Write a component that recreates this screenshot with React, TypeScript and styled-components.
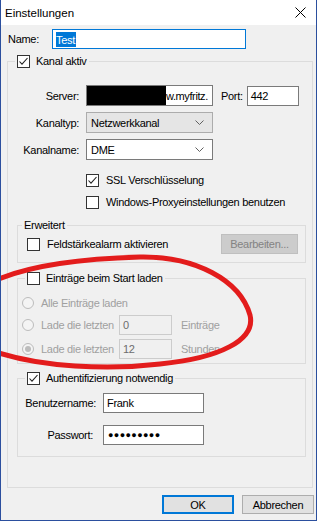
import React from "react";
import styled, { createGlobalStyle } from "styled-components";

const FONT = `"Liberation Sans", Arial, sans-serif`;

const GlobalStyle = createGlobalStyle`
  html, body { margin: 0; padding: 0; background: #ffffff; }
  body { font-family: ${FONT}; }
`;

const Window = styled.div`
  position: relative;
  box-sizing: border-box;
  width: 317px;
  height: 521px;
  display: flex;
  flex-direction: column;
  background: #f0f0f0;
  border: 1px solid #2b4f9e;
  border-top: none;
  font-family: ${FONT};
  font-size: 11px;
  letter-spacing: -0.3px;
  line-height: 14px;
  color: #000;
  overflow: hidden;
`;

const TitleBar = styled.div`
  flex: none;
  height: 25px;
  background: #ffffff;
  display: flex;
  align-items: center;
  justify-content: space-between;
  padding: 0 10px 0 4px;
  font-size: 11.5px;
  letter-spacing: 0;
`;

const Content = styled.div`
  display: flex;
  flex-direction: column;
  padding-top: 4px;
`;

const NameRow = styled.div`
  display: flex;
  align-items: center;
  padding-left: 7px;
  height: 20px;
`;

const NameLabel = styled.span`
  width: 44px;
`;

const Field = styled.div<{ $w: number; $h?: number; $variant?: "normal" | "focus" | "disabled" }>`
  box-sizing: border-box;
  flex: none;
  width: ${(p) => p.$w}px;
  height: ${(p) => p.$h ?? 20}px;
  display: flex;
  align-items: center;
  padding: 0 3px;
  overflow: hidden;
  white-space: nowrap;
  background: ${(p) => (p.$variant === "disabled" ? "#f0f0f0" : "#ffffff")};
  border: 1px solid
    ${(p) => (p.$variant === "focus" ? "#0078d7" : p.$variant === "disabled" ? "#cccccc" : "#7a7a7a")};
  color: ${(p) => (p.$variant === "disabled" ? "#6d6d6d" : "#000000")};
`;

const Selected = styled.span`
  background: #0078d7;
  color: #ffffff;
  padding: 1px 1px 0 0;
`;

const ServerField = styled(Field)`
  padding: 0;
`;

const Redaction = styled.span`
  flex: none;
  align-self: stretch;
  width: 80px;
  margin: -1px 0 -1px -1px;
  background: #000000;
`;

const ServerText = styled.span`
  letter-spacing: -0.4px;
`;

const Group = styled.fieldset<{ $m: string }>`
  margin: ${(p) => p.$m};
  padding: 0;
  border: 1px solid #dcdcdc;
  min-width: 0;
`;

const Legend = styled.legend<{ $offset: number }>`
  margin-left: ${(p) => p.$offset}px;
  padding: 0 2px;
  height: 14px;
  line-height: 14px;
`;

const LegendInner = styled.span`
  display: inline-flex;
  align-items: center;
  gap: 6px;
  height: 14px;
`;

const GroupBody = styled.div<{ $pad: string }>`
  display: flex;
  flex-direction: column;
  padding: ${(p) => p.$pad};
`;

const FormGrid = styled.div`
  display: grid;
  grid-template-columns: 71px auto;
  column-gap: 7px;
  row-gap: 6px;
  margin-top: 17px;
  align-items: center;
`;

const GridLabel = styled.span<{ $shift?: number }>`
  justify-self: end;
  white-space: nowrap;
  margin-right: ${(p) => p.$shift ?? 0}px;
`;

const InlineRow = styled.div`
  display: flex;
  align-items: center;
`;

const PortLabel = styled.span`
  margin: 0 4px 0 8px;
`;

const Combo = styled.div<{ $readonly?: boolean }>`
  box-sizing: border-box;
  width: 127px;
  height: 21px;
  display: flex;
  align-items: center;
  justify-content: space-between;
  padding: 0 8px 0 4px;
  background: ${(p) => (p.$readonly ? "#e5e5e5" : "#ffffff")};
  border: 1px solid ${(p) => (p.$readonly ? "#acacac" : "#7a7a7a")};
`;

const CheckRow = styled.div<{ $indent: number; $mt: number }>`
  display: flex;
  align-items: center;
  gap: 7px;
  height: 16px;
  margin-top: ${(p) => p.$mt}px;
  padding-left: ${(p) => p.$indent}px;
`;

const Box = styled.span`
  box-sizing: border-box;
  flex: none;
  width: 13px;
  height: 13px;
  border: 1px solid #333333;
  background: #ffffff;
  display: flex;
  align-items: center;
  justify-content: center;
`;

const SpaceRow = styled.div`
  display: flex;
  align-items: center;
  justify-content: space-between;
  height: 20px;
`;

const LeftGroup = styled.div`
  display: flex;
  align-items: center;
  gap: 7px;
`;

const Button = styled.div<{ $disabled?: boolean; $default?: boolean; $w: number; $h: number }>`
  box-sizing: border-box;
  width: ${(p) => p.$w}px;
  height: ${(p) => p.$h}px;
  display: flex;
  align-items: center;
  justify-content: center;
  background: ${(p) => (p.$disabled ? "#cccccc" : "#e1e1e1")};
  border: ${(p) => (p.$default ? "2px solid #0078d7" : p.$disabled ? "1px solid #bfbfbf" : "1px solid #adadad")};
  color: ${(p) => (p.$disabled ? "#838383" : "#000000")};
`;

const RadioRow = styled.div<{ $h: number }>`
  display: flex;
  align-items: center;
  height: ${(p) => p.$h}px;
  padding-left: 4px;
  color: #a0a0a0;
`;

const RadioCircle = styled.span<{ $checked?: boolean }>`
  box-sizing: border-box;
  flex: none;
  width: 12px;
  height: 12px;
  border-radius: 50%;
  border: 1px solid #bcbcbc;
  background: #f4f4f4;
  margin-right: 7px;
  display: flex;
  align-items: center;
  justify-content: center;
  &::after {
    content: "";
    display: ${(p) => (p.$checked ? "block" : "none")};
    width: 6px;
    height: 6px;
    border-radius: 50%;
    background: #bcbcbc;
  }
`;

const RadioText = styled.span<{ $w?: number }>`
  white-space: nowrap;
  ${(p) => (p.$w ? `width: ${p.$w}px;` : "")}
`;

const Unit = styled.span`
  margin-left: 9px;
  white-space: nowrap;
`;

const RadioStack = styled.div`
  display: flex;
  flex-direction: column;
  gap: 4px;
`;

const AuthGrid = styled.div`
  display: grid;
  grid-template-columns: 71px 101px;
  column-gap: 7px;
  row-gap: 12px;
  align-items: center;
  padding-left: 7px;
`;

const Dots = styled.span`
  font-size: 9px;
  letter-spacing: 0.4px;
  padding-left: 1px;
`;

const ButtonBar = styled.div`
  display: flex;
  justify-content: flex-end;
  gap: 8px;
  margin-top: 7px;
  padding-right: 2px;
`;

const Overlay = styled.svg`
  position: absolute;
  left: -1px;
  top: 0;
  pointer-events: none;
`;

const CloseIcon = () => (
  <svg width="11" height="11" viewBox="0 0 11 11">
    <path d="M0.5 0.5 L10.5 10.5 M10.5 0.5 L0.5 10.5" stroke="#000" strokeWidth="1" fill="none" />
  </svg>
);

const Chevron = () => (
  <svg width="9" height="5" viewBox="0 0 9 5">
    <polyline points="0.5,0.5 4.5,4.5 8.5,0.5" stroke="#606060" strokeWidth="1" fill="none" />
  </svg>
);

const Checkbox = ({ checked }: { checked?: boolean }) => (
  <Box>
    {checked && (
      <svg width="11" height="11" viewBox="0 0 11 11">
        <polyline points="1.5,5.5 4,8.2 9.5,2" stroke="#222" strokeWidth="1.1" fill="none" />
      </svg>
    )}
  </Box>
);

export default function App() {
  return (
    <>
      <GlobalStyle />
      <Window>
        <TitleBar>
          <span>Einstellungen</span>
          <CloseIcon />
        </TitleBar>
        <Content>
          <NameRow>
            <NameLabel>Name:</NameLabel>
            <Field $w={194} $variant="focus">
              <Selected>Test</Selected>
            </Field>
          </NameRow>

          <Group $m="5px 3px 0 6px">
            <Legend $offset={7}>
              <LegendInner>
                <Checkbox checked />
                <span>Kanal aktiv</span>
              </LegendInner>
            </Legend>
            <GroupBody $pad="0 0 30px 0">
              <FormGrid>
                <GridLabel>Server:</GridLabel>
                <InlineRow>
                  <ServerField $w={127} $h={21}>
                    <Redaction />
                    <ServerText>w.myfritz.</ServerText>
                  </ServerField>
                  <PortLabel>Port:</PortLabel>
                  <Field $w={52} $h={20}>
                    442
                  </Field>
                </InlineRow>
                <GridLabel>Kanaltyp:</GridLabel>
                <Combo $readonly>
                  <span>Netzwerkkanal</span>
                  <Chevron />
                </Combo>
                <GridLabel>Kanalname:</GridLabel>
                <Combo>
                  <span>DME</span>
                  <Chevron />
                </Combo>
              </FormGrid>

              <CheckRow $indent={78} $mt={12}>
                <Checkbox checked />
                <span>SSL Verschlüsselung</span>
              </CheckRow>
              <CheckRow $indent={78} $mt={6}>
                <Checkbox />
                <span>Windows-Proxyeinstellungen benutzen</span>
              </CheckRow>

              <Group $m="8px 6px 0 9px">
                <Legend $offset={4}>Erweitert</Legend>
                <GroupBody $pad="2px 7px 8px 9px">
                  <SpaceRow>
                    <LeftGroup>
                      <Checkbox />
                      <span>Feldstärkealarm aktivieren</span>
                    </LeftGroup>
                    <Button $disabled $w={77} $h={20}>
                      Bearbeiten...
                    </Button>
                  </SpaceRow>
                </GroupBody>
              </Group>

              <Group $m="8px 6px 0 9px">
                <Legend $offset={7}>
                  <LegendInner>
                    <Checkbox />
                    <span>Einträge beim Start laden</span>
                  </LegendInner>
                </Legend>
                <GroupBody $pad="9px 0 4px 0">
                  <RadioStack>
                    <RadioRow $h={17}>
                      <RadioCircle />
                      <RadioText>Alle Einträge laden</RadioText>
                    </RadioRow>
                    <RadioRow $h={20}>
                      <RadioCircle />
                      <RadioText $w={78}>Lade die letzten</RadioText>
                      <Field $w={53} $variant="disabled">
                        0
                      </Field>
                      <Unit>Einträge</Unit>
                    </RadioRow>
                    <RadioRow $h={20}>
                      <RadioCircle $checked />
                      <RadioText $w={78}>Lade die letzten</RadioText>
                      <Field $w={53} $variant="disabled">
                        12
                      </Field>
                      <Unit>Stunden</Unit>
                    </RadioRow>
                  </RadioStack>
                </GroupBody>
              </Group>

              <Group $m="7px 6px 0 9px">
                <Legend $offset={7}>
                  <LegendInner>
                    <Checkbox checked />
                    <span>Authentifizierung notwendig</span>
                  </LegendInner>
                </Legend>
                <GroupBody $pad="8px 0 11px 0">
                  <AuthGrid>
                    <GridLabel>Benutzername:</GridLabel>
                    <Field $w={101}>Frank</Field>
                    <GridLabel $shift={3}>Passwort:</GridLabel>
                    <Field $w={101}>
                      <Dots>●●●●●●●●●</Dots>
                    </Field>
                  </AuthGrid>
                </GroupBody>
              </Group>
            </GroupBody>
          </Group>

          <ButtonBar>
            <Button $default $w={72} $h={19}>
              OK
            </Button>
            <Button $w={72} $h={19}>
              Abbrechen
            </Button>
          </ButtonBar>
        </Content>

        <Overlay width="317" height="521" viewBox="0 0 317 521">
          <path
            d="M -10 283 C 20 268, 70 259, 140 257 C 195 256, 240 280, 250 315 C 256 340, 220 358, 160 364 C 110 370, 40 368, -10 350"
            stroke="#e31c1c"
            strokeWidth="5"
            fill="none"
            strokeLinecap="round"
          />
        </Overlay>
      </Window>
    </>
  );
}
